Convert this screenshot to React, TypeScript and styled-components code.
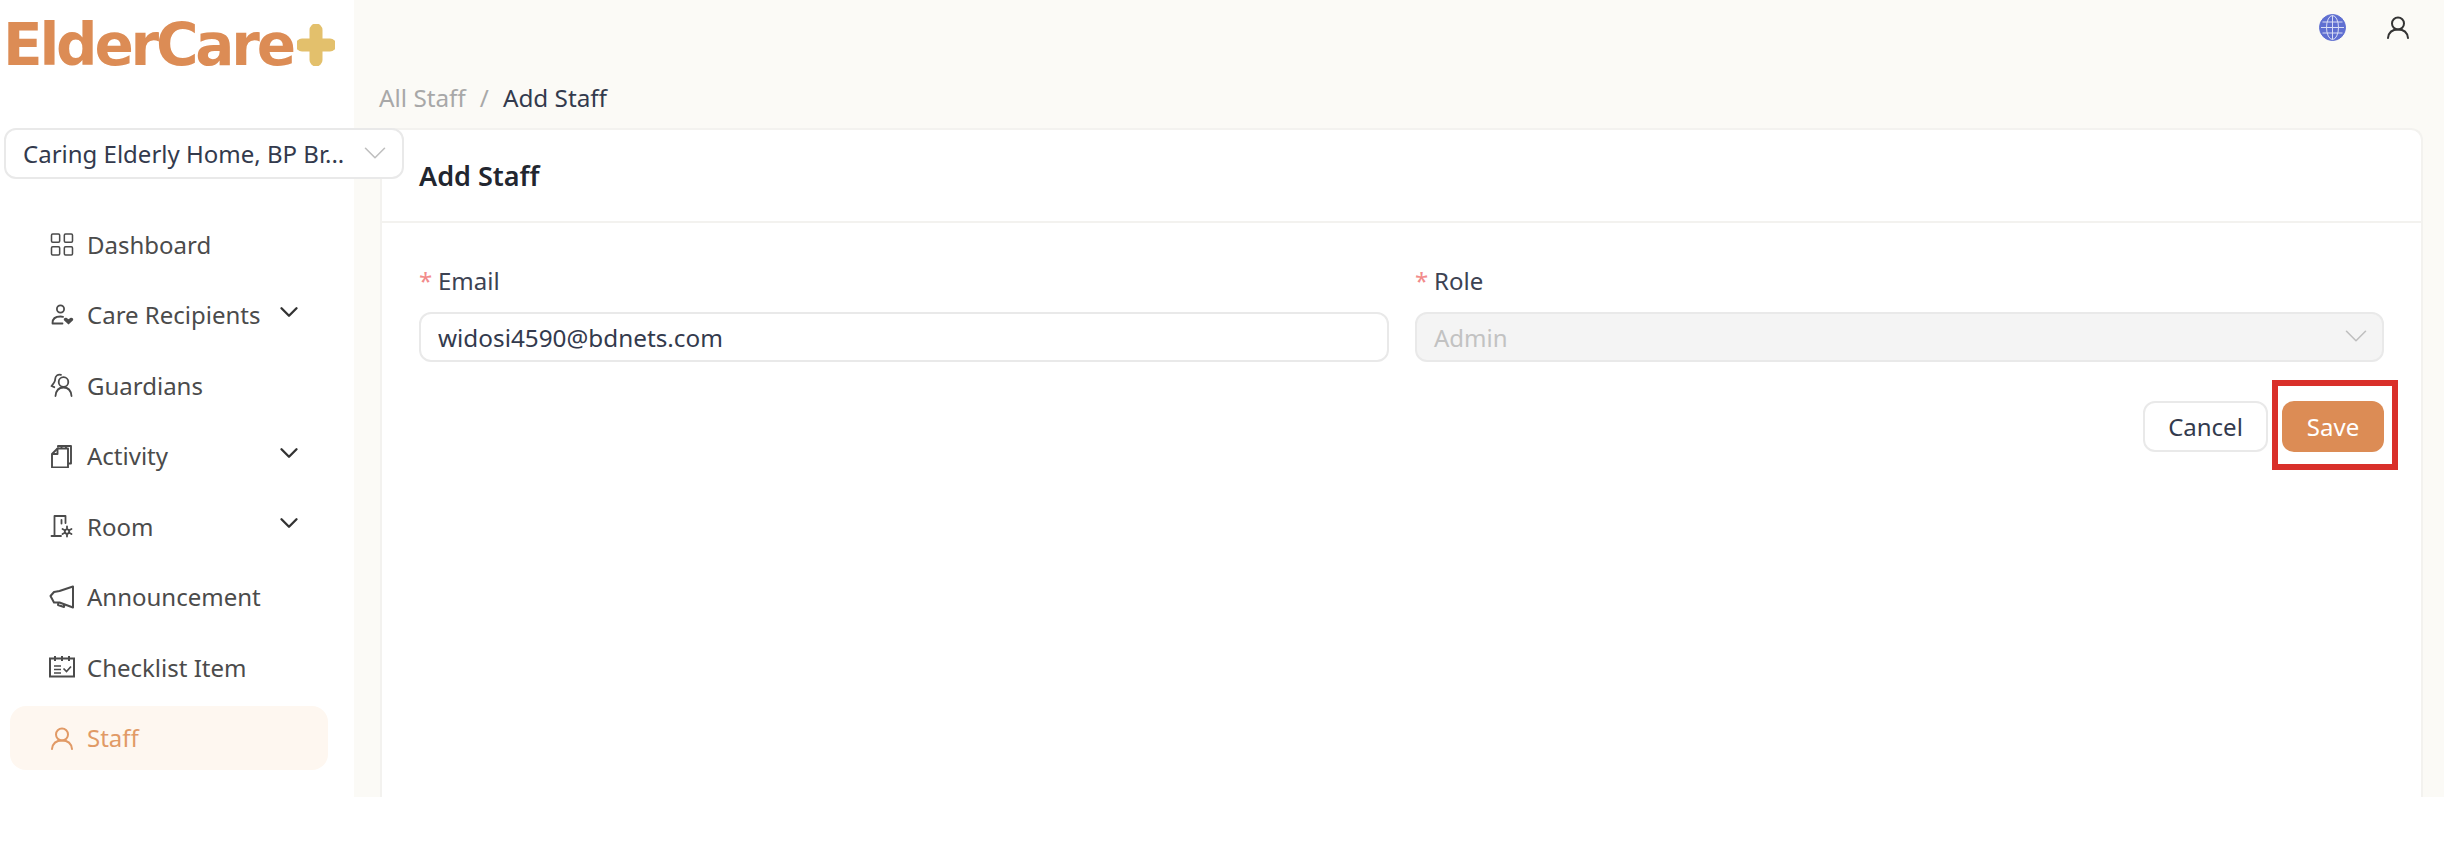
import React from 'react'
import styled, { createGlobalStyle } from 'styled-components'
import { ChevronDown, LayoutGrid } from 'lucide-react'

const GlobalStyle = createGlobalStyle`
  html, body {
    margin: 0;
    padding: 0;
    background: #fff;
    font-family: 'Noto Sans', 'Open Sans', sans-serif;
  }
  * { box-sizing: border-box; }
`

const CareIcon = () => (
  <svg width="24" height="24" viewBox="0 0 24 24" fill="none" stroke="currentColor" strokeWidth="1.8" strokeLinecap="round">
    <circle cx="10.500" cy="6" r="3.600" />
    <path d="M2.500 20c0-4.500 3.500-6.500 8-6.500 1 0 1.800.1 2.600.3M2.500 20.500h10" />
    <path d="M18.500 21.500l-4.300-4c-1.300-1.400.7-3.600 2.500-2.400l1.800 1.100 1.800-1.100c1.800-1.200 3.800 1 2.500 2.400z" fill="currentColor" stroke="none" />
  </svg>
)

const GuardianIcon = () => (
  <svg width="24" height="24" viewBox="0 0 24 24" fill="none" stroke="currentColor" strokeWidth="1.8" strokeLinecap="round" strokeLinejoin="round">
    <circle cx="13.500" cy="9" r="4.800" />
    <path d="M5.500 23c.5-5.500 3.600-8.500 8-8.500s7.500 3 8 8.500" />
    <path d="M11 1.800c-3-1-5.800 1.200-5.800 4.200 0 2.500-.4 3.500-3.700 7l2.800 1.200" />
  </svg>
)

const ActivityIcon = () => (
  <svg width="24" height="24" viewBox="0 0 24 24" fill="none" stroke="currentColor" strokeWidth="1.9" strokeLinejoin="round">
    <path d="M8 3.500V2h13v17.500h-3" />
    <path d="M2 10l5.500-5.500H18v19H2z" />
    <path d="M7.500 4.500V10H2" />
    <path d="M11.500 1v3M16 1v3" />
  </svg>
)

const RoomIcon = () => (
  <svg width="24" height="24" viewBox="0 0 24 24" fill="none" stroke="currentColor" strokeWidth="1.8" strokeLinecap="round" strokeLinejoin="round">
    <path d="M1.500 22H11M4.500 22V2H15.500V9" />
    <path d="M11.500 6v3.500" />
    <circle cx="17" cy="17.500" r="2.200" />
    <path d="M17 12.500v2.500M17 20v2.500M12.500 15l2.300 1.300M19.200 18.700l2.300 1.300M12.500 20l2.300-1.300M19.200 16.300l2.300-1.300" />
  </svg>
)

const MegaphoneIcon = () => (
  <svg width="26" height="26" viewBox="0 0 26 26" fill="none" stroke="currentColor" strokeWidth="2" strokeLinejoin="round">
    <path d="M24 2.500v21l-13.500-5H5L1.500 12 5 8l5.500-1z" />
    <path d="M9.500 18.500l-.5 2.500 6 2 .5-2.500" />
  </svg>
)

const ChecklistIcon = () => (
  <svg width="28" height="24" viewBox="0 0 28 24" fill="none" stroke="currentColor" strokeWidth="2">
    <rect x="2" y="3.500" width="24" height="18" />
    <path d="M7 1v5M14 1v5M21 1v5" />
    <path d="M6 11h7M6 14.500h7M6 18h7" strokeWidth="1.500" />
    <path d="M15.500 13.500l3 3 4.500-5" strokeWidth="1.700" />
  </svg>
)

const UserIcon = () => (
  <svg width="24" height="24" viewBox="0 0 24 24" fill="none" stroke="currentColor" strokeWidth="2" strokeLinecap="round">
    <circle cx="12" cy="8.500" r="6" />
    <path d="M2 23c.6-5.500 4.600-8.500 10-8.500s9.400 3 10 8.500" />
  </svg>
)

const GlobeIcon = () => (
  <svg width="27" height="27" viewBox="0 0 27 27" fill="#5f6fd1" stroke="#d9ddf5" strokeWidth="1">
    <circle cx="13.500" cy="13.500" r="13" stroke="#5f6fd1" />
    <ellipse cx="13.500" cy="13.500" rx="6" ry="12" fill="none" />
    <path d="M13.500 1.500v24M2 13.500h23M3.500 8h20M3.500 19h20" fill="none" />
  </svg>
)

const navItems = [
  { label: 'Dashboard', icon: <LayoutGrid size={29} strokeWidth={1.3} /> },
  { label: 'Care Recipients', icon: <CareIcon />, hasMenu: true },
  { label: 'Guardians', icon: <GuardianIcon /> },
  { label: 'Activity', icon: <ActivityIcon />, hasMenu: true },
  { label: 'Room', icon: <RoomIcon />, hasMenu: true },
  { label: 'Announcement', icon: <MegaphoneIcon /> },
  { label: 'Checklist Item', icon: <ChecklistIcon /> },
  { label: 'Staff', icon: <UserIcon />, active: true },
]

const App: React.FC = () => {
  return (
    <>
      <GlobalStyle />
      <Page>
        <Sidebar>
          <Logo>
            <LogoText>ElderCare</LogoText>
            <svg width="38" height="42" viewBox="0 0 38 42">
              <path d="M19 6v30M5 21h28" stroke="#e3c06c" strokeWidth="13" strokeLinecap="round" />
            </svg>
          </Logo>
          <HomeSelect>
            <HomeName>Caring Elderly Home, BP Br...</HomeName>
            <SelectArrow>
              <ChevronDown size={38} strokeWidth={1} color="#bfbfbf" />
            </SelectArrow>
          </HomeSelect>
          <Nav>
            {navItems.map(item => (
              <NavItem key={item.label} $active={item.active}>
                <NavIcon>{item.icon}</NavIcon>
                <NavLabel>{item.label}</NavLabel>
                {item.hasMenu && (
                  <NavChevron>
                    <ChevronDown size={30} strokeWidth={1.9} />
                  </NavChevron>
                )}
              </NavItem>
            ))}
          </Nav>
        </Sidebar>
        <Main>
          <TopBar>
            <GlobeIcon />
            <TopUser>
              <UserIcon />
            </TopUser>
          </TopBar>
          <Breadcrumb>
            <Crumb>All Staff</Crumb>
            <Crumb>/</Crumb>
            <Crumb $current>Add Staff</Crumb>
          </Breadcrumb>
          <Card>
            <CardHeader>Add Staff</CardHeader>
            <CardBody>
              <FormGrid>
                <Field>
                  <Label>
                    <Star>*</Star>Email
                  </Label>
                  <TextInput value="widosi4590@bdnets.com" readOnly />
                </Field>
                <Field>
                  <Label>
                    <Star>*</Star>Role
                  </Label>
                  <DisabledSelect>
                    <span>Admin</span>
                    <SelectArrow>
                      <ChevronDown size={38} strokeWidth={1} color="#bfbfbf" />
                    </SelectArrow>
                  </DisabledSelect>
                </Field>
              </FormGrid>
              <Actions>
                <CancelButton>Cancel</CancelButton>
                <SaveWrap>
                  <SaveButton>Save</SaveButton>
                  <Highlight />
                </SaveWrap>
              </Actions>
            </CardBody>
          </Card>
        </Main>
      </Page>
    </>
  )
}

export default App

const Page = styled.div`
  display: flex;
  width: 2444px;
  height: 797px;
`
const Sidebar = styled.aside`
  width: 354px;
  flex: none;
  background: #fff;
  padding: 21px 0 0 4px;
  position: relative;
  z-index: 1;
`
const Logo = styled.div`
  height: 48px;
  margin-left: -1px;
  display: flex;
  align-items: center;
  gap: 4px;
`
const LogoText = styled.span`
  font-family: 'DejaVu Sans', sans-serif;
  font-weight: 700;
  font-size: 58px;
  line-height: 48px;
  letter-spacing: -3.2px;
  color: #dc8c55;
`
const HomeSelect = styled.div`
  width: 400px;
  height: 51px;
  margin-top: 59px;
  padding: 0 8px 0 17px;
  display: flex;
  align-items: center;
  justify-content: space-between;
  background: #fff;
  border: 2px solid #e9e9e9;
  border-radius: 12px;
`
const HomeName = styled.span`
  font-size: 24px;
  color: #333a4d;
  white-space: nowrap;
`
const SelectArrow = styled.span`
  width: 38px;
  height: 38px;
  margin-top: -2px;
  flex: none;
  display: flex;
`
const Nav = styled.nav`
  margin: 33px 0 0 6px;
  width: 318px;
  display: flex;
  flex-direction: column;
  gap: 6.5px;
`
const NavItem = styled.div<{ $active?: boolean }>`
  height: 64px;
  padding-left: 38px;
  display: flex;
  align-items: center;
  border-radius: 16px;
  color: ${props => (props.$active ? '#e19a66' : '#4b4b4b')};
  background: ${props => (props.$active ? '#fef7f0' : 'transparent')};
`
const NavIcon = styled.span`
  width: 28px;
  height: 28px;
  margin-right: 11px;
  flex: none;
  display: flex;
  align-items: center;
  justify-content: center;
`
const NavLabel = styled.span`
  font-size: 24px;
`
const NavChevron = styled.span`
  margin-left: auto;
  margin-right: 24px;
  margin-top: -6px;
  display: flex;
  color: #333;
`
const Main = styled.main`
  flex: 1;
  min-width: 0;
  display: flex;
  flex-direction: column;
  background: #fbfaf6;
  padding: 0 21px 0 26px;
`
const TopBar = styled.header`
  height: 54px;
  flex: none;
  display: flex;
  align-items: center;
  justify-content: flex-end;
  gap: 40px;
  padding-right: 13px;
`
const TopUser = styled.span`
  display: flex;
  color: #333;
`
const Breadcrumb = styled.div`
  height: 74px;
  flex: none;
  display: flex;
  align-items: center;
  gap: 14px;
  padding-top: 12px;
  margin-left: -1px;
`
const Crumb = styled.span<{ $current?: boolean }>`
  font-size: 24.300px;
  color: ${props => (props.$current ? '#333a4d' : '#a8a8a8')};
`
const Card = styled.section`
  flex: 1;
  background: #fff;
  border: 2px solid #f3f2ef;
  border-bottom: none;
  border-radius: 12px 12px 0 0;
`
const CardHeader = styled.div`
  height: 93px;
  padding: 0 37px;
  display: flex;
  align-items: center;
  border-bottom: 2px solid #f3f2ef;
  font-size: 27px;
  font-weight: 600;
  color: #22262f;
`
const CardBody = styled.div`
  padding: 39px 37px 0;
`
const FormGrid = styled.div`
  display: grid;
  grid-template-columns: 970px 969px;
  justify-content: space-between;
`
const Field = styled.div`
  display: flex;
  flex-direction: column;
  gap: 14px;
`
const Label = styled.label`
  height: 36px;
  display: flex;
  align-items: center;
  font-size: 24px;
  color: #3c4252;
`
const Star = styled.span`
  width: 19px;
  color: #f28b8b;
`
const TextInput = styled.input`
  height: 50px;
  padding: 0 17px;
  border: 2px solid #e9e9e9;
  border-radius: 12px;
  outline: none;
  font-family: inherit;
  font-size: 24.300px;
  color: #333a4d;
`
const DisabledSelect = styled.div`
  height: 50px;
  padding: 0 7px 0 17px;
  display: flex;
  align-items: center;
  justify-content: space-between;
  background: #f4f4f4;
  border: 2px solid #e9e9e9;
  border-radius: 12px;
  font-size: 24px;
  color: #c2c2c2;
`
const Actions = styled.div`
  margin-top: 39px;
  display: flex;
  justify-content: flex-end;
  gap: 14px;
`
const CancelButton = styled.button`
  width: 125px;
  height: 51px;
  background: #fff;
  border: 2px solid #e9e9e9;
  border-radius: 12px;
  font-family: inherit;
  font-size: 24px;
  color: #333a4d;
`
const SaveWrap = styled.div`
  position: relative;
`
const SaveButton = styled.button`
  display: block;
  width: 102px;
  height: 51px;
  background: #dc8c55;
  border: none;
  border-radius: 12px;
  font-family: inherit;
  font-size: 24px;
  color: #fff;
`
const Highlight = styled.div`
  position: absolute;
  top: -21px;
  left: -10px;
  right: -14px;
  bottom: -18px;
  border: 6px solid #d9302a;
  pointer-events: none;
`
